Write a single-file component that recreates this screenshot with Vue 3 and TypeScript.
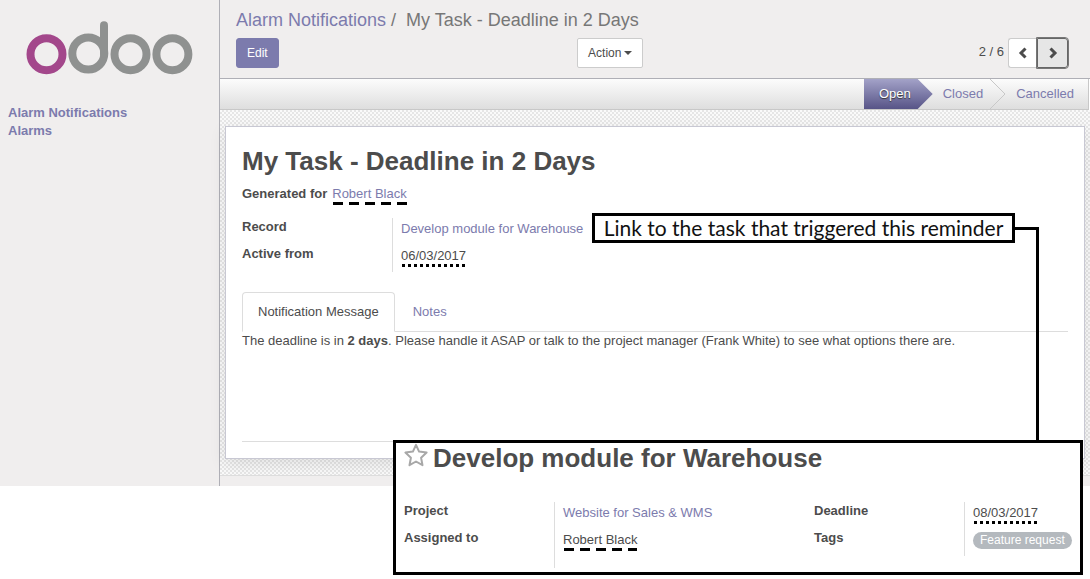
<script setup lang="ts">
import { ref } from 'vue'

const menu: string[] = ['Alarm Notifications', 'Alarms']
const tabs: string[] = ['Notification Message', 'Notes']
const activeTab = ref(0)
</script>

<template>
  <div class="page">
    <div class="client">
      <nav class="sidebar">
        <a href="#" class="brand" aria-label="odoo">
          <svg width="168" height="56" viewBox="0 0 168 56" fill="none" stroke="#8f9190" stroke-width="8">
            <circle cx="20.5" cy="34.2" r="16" stroke="#a3478b" />
            <circle cx="62.3" cy="33.6" r="16" />
            <path d="M78 34V5.2" stroke-linecap="round" />
            <circle cx="104.5" cy="34.2" r="16" />
            <circle cx="146.4" cy="34.2" r="16" />
          </svg>
        </a>
        <ul class="menu">
          <li v-for="item in menu" :key="item"><a href="#">{{ item }}</a></li>
        </ul>
      </nav>

      <main class="main">
        <header class="control">
          <div class="crumbs"><a href="#">Alarm Notifications</a><span class="slash">/</span><span>My Task - Deadline in 2 Days</span></div>
          <div class="tools">
            <div><button type="button" class="btn primary">Edit</button></div>
            <div><button type="button" class="btn">Action<i class="caret"></i></button></div>
            <div class="pager">
              <span>2 / 6</span>
              <button type="button" class="step prev" aria-label="Previous">
                <svg width="10" height="12" viewBox="0 0 10 12"><path d="M7.500 1.500L3 6l4.500 4.500" fill="none" stroke="#4c4c4c" stroke-width="3" /></svg>
              </button>
              <button type="button" class="step next" aria-label="Next">
                <svg width="10" height="12" viewBox="0 0 10 12"><path d="M2.500 1.500L7 6l-4.500 4.500" fill="none" stroke="#4c4c4c" stroke-width="3" /></svg>
              </button>
            </div>
          </div>
        </header>

        <div class="statusbar">
          <ol class="stages">
            <li class="stage open">Open</li>
            <li class="stage closed">
              Closed
              <svg width="16" height="30" viewBox="0 0 16 30"><path d="M0 0L15 15L0 30" fill="none" stroke="#c8c8c8" /></svg>
            </li>
            <li class="stage cancelled">Cancelled</li>
          </ol>
        </div>

        <div class="backdrop">
          <article class="sheet">
            <h1>My Task - Deadline in 2 Days</h1>
            <p class="generated"><b>Generated for</b><a href="#" class="dashed">Robert Black</a></p>
            <dl class="fields">
              <dt>Record</dt>
              <dd><a href="#">Develop module for Warehouse</a></dd>
              <dt>Active from</dt>
              <dd><span class="dotted">06/03/2017</span></dd>
            </dl>
            <div class="tabs" role="tablist">
              <button
                v-for="(tab, i) in tabs"
                :key="tab"
                type="button"
                role="tab"
                :aria-selected="i === activeTab"
                :class="['tab', { active: i === activeTab }]"
                @click="activeTab = i"
              >{{ tab }}</button>
            </div>
            <div class="message">
              <p v-if="activeTab === 0">The deadline is in <b>2 days</b>. Please handle it ASAP or talk to the project manager (Frank White) to see what options there are.</p>
            </div>
          </article>
        </div>
        <div class="tail"></div>
      </main>
    </div>

    <div class="connector"></div>
    <div class="callout">Link to the task that triggered this reminder</div>

    <section class="panel">
      <h2>
        <svg width="24" height="24" viewBox="0 0 24 24"><path d="M12 1.800L15.100 8.600L22.600 9.600L17.100 14.700L18.500 22.200L12 18.500L5.500 22.200L6.900 14.700L1.400 9.600L8.900 8.600Z" fill="none" stroke="#a8a8a8" stroke-width="2" stroke-linejoin="round" /></svg>
        <span>Develop module for Warehouse</span>
      </h2>
      <div class="groups">
        <dl class="fields tall">
          <dt>Project</dt>
          <dd><a href="#">Website for Sales &amp; WMS</a></dd>
          <dt>Assigned to</dt>
          <dd><span class="dashed">Robert Black</span></dd>
        </dl>
        <dl class="fields">
          <dt>Deadline</dt>
          <dd><span class="dotted">08/03/2017</span></dd>
          <dt>Tags</dt>
          <dd><span class="tag">Feature request</span></dd>
        </dl>
      </div>
    </section>
  </div>
</template>

<style>
body {
  background: #fff;
}
</style>

<style scoped>
.page {
  position: relative;
  min-height: 100vh;
  font: 13px/18px "Liberation Sans", Arial, sans-serif;
  color: #4c4c4c;
}
.page * {
  box-sizing: border-box;
}
a {
  color: #7c7bad;
  text-decoration: none;
}
button {
  font-family: inherit;
  cursor: pointer;
}
h1, h2, p, ul, ol, dl, dd {
  margin: 0;
  padding: 0;
  list-style: none;
}
.client {
  display: flex;
}
.sidebar {
  flex: 0 0 220px;
  background: #f0eeee;
  border-right: 1px solid #afafb6;
}
.brand {
  display: block;
  height: 56px;
  margin: 20px 25px 28px 26px;
}
.brand svg {
  display: block;
}
.menu {
  padding: 0 8px;
  font-weight: bold;
}
.main {
  flex: 1;
  min-width: 0;
}
.control {
  padding: 8px 22px 10px 16px;
  background: #f0eeee;
  border-bottom: 1px solid #afafb6;
}
.crumbs {
  font-size: 18px;
  line-height: 24px;
  color: #777;
}
.slash {
  margin: 0 10px 0 5px;
}
.tools {
  display: grid;
  grid-template-columns: 41% 1fr auto;
  margin-top: 6px;
}
.btn {
  display: inline-flex;
  align-items: center;
  height: 30px;
  padding: 0 10px;
  border: 1px solid #ccc;
  border-radius: 2px;
  background: #fff;
  color: #4c4c4c;
  font-size: 12px;
}
.primary {
  border-color: #7c7bad;
  border-radius: 3px;
  background: #7c7bad;
  color: #fff;
}
.caret {
  margin-left: 3px;
  border: 4px solid transparent;
  border-top-color: #4c4c4c;
  border-bottom: 0;
}
.pager {
  display: flex;
  align-items: center;
}
.pager span {
  margin: -2px 4px 0 0;
}
.step {
  display: flex;
  align-items: center;
  justify-content: center;
  height: 30px;
  padding: 0;
  border: 1px solid #ccc;
  background: #fff;
}
.prev {
  width: 29px;
  border-right: 0;
  border-radius: 3px 0 0 3px;
}
.next {
  width: 31px;
  border: 1px solid #666;
  border-radius: 0 3px 3px 0;
  background: #e6e6e6;
  outline: 1px solid #777;
}
.statusbar {
  display: flex;
  justify-content: flex-end;
  height: 31px;
  margin-right: 1px;
  border-right: 1px solid #c8c8c8;
  border-bottom: 1px solid #c8c8c8;
  background: linear-gradient(#fcfcfc, #dedede);
}
.stages {
  display: flex;
  line-height: 30px;
  color: #7c7bad;
}
.stage {
  display: flex;
}
.open {
  padding: 0 22px 0 15px;
  background: linear-gradient(#a3a2c8, #575487);
  clip-path: polygon(0 0, calc(100% - 15px) 0, 100% 50%, calc(100% - 15px) 100%, 0 100%);
  color: #fff;
  text-shadow: 0 1px 1px #333;
}
.closed {
  gap: 7px;
  padding-left: 10px;
}
.cancelled {
  padding: 0 14px 0 10px;
}
.backdrop {
  padding: 16px 5px;
  background: repeating-conic-gradient(#e6e6e6 0 25%, #fafafa 0 50%) 0 0 / 4px 4px;
}
.sheet {
  padding: 19px 16px 16px;
  border: 1px solid #c8c8d3;
  background: #fff;
  box-shadow: 0 5px 15px rgba(0, 0, 0, 0.1);
}
h1 {
  font-size: 26px;
  line-height: 30px;
}
.generated {
  margin: 9px 0 15px;
}
.generated b {
  margin-right: 5px;
}
.fields {
  display: grid;
  grid-template-columns: 150px 1fr;
  grid-auto-rows: 27px;
}
dt {
  font-weight: bold;
}
dd {
  padding: 2px 0 0 8px;
  border-left: 1px solid #ddd;
}
.dashed,
.dotted {
  position: relative;
  display: inline-block;
}
.dashed::after,
.dotted::after {
  content: "";
  position: absolute;
  left: 1px;
  right: 0;
  top: 17px;
  height: 3px;
  background: repeating-linear-gradient(90deg, #000 0 10px, transparent 10px 16px);
}
.dotted::after {
  right: -1px;
  background: repeating-linear-gradient(90deg, #000 0 3px, transparent 3px 6px);
}
.tabs {
  display: flex;
  gap: 2px;
  margin-top: 20px;
  border-bottom: 1px solid #ddd;
}
.tab {
  height: 40px;
  margin-bottom: -1px;
  padding: 0 15px 2px;
  border: 1px solid transparent;
  border-radius: 4px 4px 0 0;
  background: none;
  color: #7c7bad;
  font-size: 13px;
}
.tab.active {
  border-color: #ddd;
  border-bottom-color: #fff;
  background: #fff;
  color: #4c4c4c;
}
.message {
  min-height: 110px;
  border-bottom: 1px solid #ddd;
}
.tail {
  height: 11px;
  border-top: 1px solid #ddd;
  background: #f0eeee;
}
.callout {
  position: absolute;
  top: 213px;
  left: 592px;
  right: 75px;
  height: 30px;
  border: 3px solid #000;
  background: #fff;
  color: #111;
  font: 21px/24px Lato, sans-serif;
  text-align: center;
  white-space: nowrap;
}
.connector {
  position: absolute;
  top: 227px;
  right: 51px;
  width: 24px;
  height: 214px;
  border: solid #000;
  border-width: 3px 3px 0 0;
}
.panel {
  position: relative;
  margin: -46px 7px 0 393px;
  padding: 0 8px 4px;
  border: 3px solid #000;
  background: #fff;
}
h2 {
  display: flex;
  gap: 5px;
  font-size: 26px;
  line-height: 30px;
}
.groups {
  display: grid;
  grid-template-columns: 410px 1fr;
  align-items: start;
  margin-top: 29px;
}
.tall {
  grid-template-rows: 27px 39px;
}
.tag {
  display: inline-block;
  padding: 0 7px;
  border-radius: 9px;
  background: #b4b9be;
  color: #fff;
  font-size: 12px;
  line-height: 17px;
}
</style>
